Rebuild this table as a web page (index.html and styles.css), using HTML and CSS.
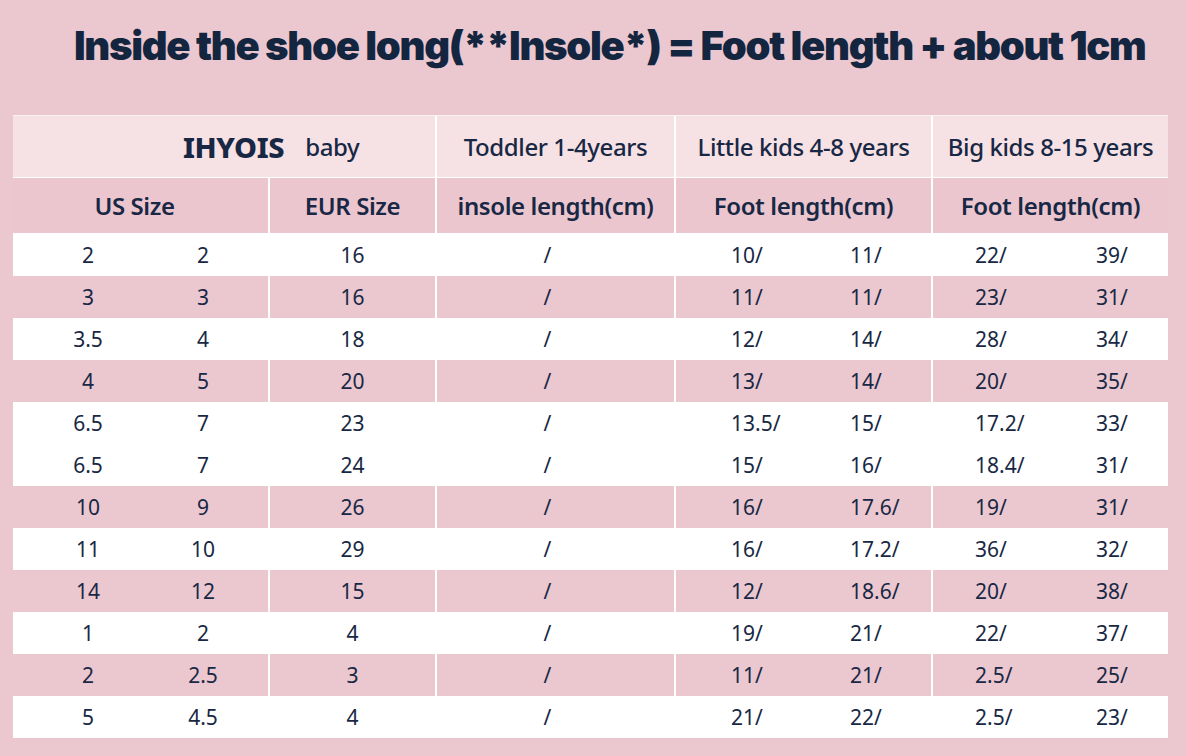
FILE: index.html
```html
<!DOCTYPE html>
<html lang="en">
<head>
<meta charset="utf-8">
<title>Size chart</title>
<link rel="stylesheet" href="styles.css">
</head>
<body>
<main class="page">
  <h1 class="title">Inside the shoe long(**Insole*) = Foot length + about 1cm</h1>
  <div class="chart">
    <div class="row head1">
      <div class="cell c12 brand"><span class="logo">IHYOIS</span><span class="baby">baby</span></div>
      <div class="cell c3">Toddler 1-4years</div>
      <div class="cell c4">Little kids 4-8 years</div>
      <div class="cell c5">Big kids 8-15 years</div>
    </div>
    <div class="row head2">
      <div class="cell c1">US Size</div>
      <div class="cell c2">EUR Size</div>
      <div class="cell c3">insole length(cm)</div>
      <div class="cell c4">Foot length(cm)</div>
      <div class="cell c5">Foot length(cm)</div>
    </div>

    <div class="row data">
      <div class="cell c1 pair"><span class="a">2</span><span class="b">2</span></div>
      <div class="cell c2">16</div><div class="cell c3">/</div>
      <div class="cell c4 pair"><span class="a">10/</span><span class="b">11/</span></div>
      <div class="cell c5 pair"><span class="a">22/</span><span class="b">39/</span></div>
    </div>
    <div class="row data pink">
      <div class="cell c1 pair"><span class="a">3</span><span class="b">3</span></div>
      <div class="cell c2">16</div><div class="cell c3">/</div>
      <div class="cell c4 pair"><span class="a">11/</span><span class="b">11/</span></div>
      <div class="cell c5 pair"><span class="a">23/</span><span class="b">31/</span></div>
    </div>
    <div class="row data">
      <div class="cell c1 pair"><span class="a">3.5</span><span class="b">4</span></div>
      <div class="cell c2">18</div><div class="cell c3">/</div>
      <div class="cell c4 pair"><span class="a">12/</span><span class="b">14/</span></div>
      <div class="cell c5 pair"><span class="a">28/</span><span class="b">34/</span></div>
    </div>
    <div class="row data pink">
      <div class="cell c1 pair"><span class="a">4</span><span class="b">5</span></div>
      <div class="cell c2">20</div><div class="cell c3">/</div>
      <div class="cell c4 pair"><span class="a">13/</span><span class="b">14/</span></div>
      <div class="cell c5 pair"><span class="a">20/</span><span class="b">35/</span></div>
    </div>
    <div class="row data">
      <div class="cell c1 pair"><span class="a">6.5</span><span class="b">7</span></div>
      <div class="cell c2">23</div><div class="cell c3">/</div>
      <div class="cell c4 pair"><span class="a">13.5/</span><span class="b">15/</span></div>
      <div class="cell c5 pair"><span class="a">17.2/</span><span class="b">33/</span></div>
    </div>
    <div class="row data">
      <div class="cell c1 pair"><span class="a">6.5</span><span class="b">7</span></div>
      <div class="cell c2">24</div><div class="cell c3">/</div>
      <div class="cell c4 pair"><span class="a">15/</span><span class="b">16/</span></div>
      <div class="cell c5 pair"><span class="a">18.4/</span><span class="b">31/</span></div>
    </div>
    <div class="row data pink">
      <div class="cell c1 pair"><span class="a">10</span><span class="b">9</span></div>
      <div class="cell c2">26</div><div class="cell c3">/</div>
      <div class="cell c4 pair"><span class="a">16/</span><span class="b">17.6/</span></div>
      <div class="cell c5 pair"><span class="a">19/</span><span class="b">31/</span></div>
    </div>
    <div class="row data">
      <div class="cell c1 pair"><span class="a">11</span><span class="b">10</span></div>
      <div class="cell c2">29</div><div class="cell c3">/</div>
      <div class="cell c4 pair"><span class="a">16/</span><span class="b">17.2/</span></div>
      <div class="cell c5 pair"><span class="a">36/</span><span class="b">32/</span></div>
    </div>
    <div class="row data pink">
      <div class="cell c1 pair"><span class="a">14</span><span class="b">12</span></div>
      <div class="cell c2">15</div><div class="cell c3">/</div>
      <div class="cell c4 pair"><span class="a">12/</span><span class="b">18.6/</span></div>
      <div class="cell c5 pair"><span class="a">20/</span><span class="b">38/</span></div>
    </div>
    <div class="row data">
      <div class="cell c1 pair"><span class="a">1</span><span class="b">2</span></div>
      <div class="cell c2">4</div><div class="cell c3">/</div>
      <div class="cell c4 pair"><span class="a">19/</span><span class="b">21/</span></div>
      <div class="cell c5 pair"><span class="a">22/</span><span class="b">37/</span></div>
    </div>
    <div class="row data pink">
      <div class="cell c1 pair"><span class="a">2</span><span class="b">2.5</span></div>
      <div class="cell c2">3</div><div class="cell c3">/</div>
      <div class="cell c4 pair"><span class="a">11/</span><span class="b">21/</span></div>
      <div class="cell c5 pair"><span class="a">2.5/</span><span class="b">25/</span></div>
    </div>
    <div class="row data">
      <div class="cell c1 pair"><span class="a">5</span><span class="b">4.5</span></div>
      <div class="cell c2">4</div><div class="cell c3">/</div>
      <div class="cell c4 pair"><span class="a">21/</span><span class="b">22/</span></div>
      <div class="cell c5 pair"><span class="a">2.5/</span><span class="b">23/</span></div>
    </div>
  </div>
</main>
</body>
</html>
```

FILE: styles.css
```css
* { box-sizing: border-box; }

html, body {
  margin: 0;
  padding: 0;
  background: #ebc8d0;
}

.page {
  width: 1186px;
  height: 756px;
  overflow: hidden;
  background: #ebc8d0;
  color: #182844;
  font-family: "Noto Sans", "Open Sans", sans-serif;
}

.title {
  margin: 0;
  padding: 22px 0 0 74px;
  height: 115px;
  font-family: Inter, Roboto, sans-serif;
  font-weight: 900;
  font-size: 40px;
  line-height: 48px;
  letter-spacing: -1.3px;
  color: #14263f;
  white-space: nowrap;
}

.chart {
  margin-left: 13px;
  width: 1155px;
  background: #ffffff;
}

.row {
  display: grid;
  grid-template-columns: 255px 167px 239px 257px 237px;
}

.cell {
  display: flex;
  align-items: center;
  justify-content: center;
  border-left: 2px solid #ffffff;
  white-space: nowrap;
}

.cell.c1, .cell.c12 { border-left: 0; }
.c12 { grid-column: 1 / span 2; }

.head1 {
  height: 63px;
  background: #f6e1e5;
  border-top: 1px solid #fbf0f2;
  border-bottom: 1px solid #ffffff;
  font-size: 24px;
  font-weight: 500;
  letter-spacing: -0.4px;
}

.brand { justify-content: flex-start; padding-left: 170px; }
.logo {
  font-size: 29px;
  font-weight: 800;
  letter-spacing: -0.4px;
  margin-right: 21px;
}
.baby {
  font-size: 24px;
  font-weight: 500;
}

.head2 {
  height: 56px;
  background: #ebc6cf;
  border-bottom: 1px solid #ffffff;
  font-size: 24px;
  font-weight: 600;
  letter-spacing: -0.4px;
}
.head2 .c1 { padding-right: 12px; }

.data {
  height: 42px;
  font-size: 21px;
  font-weight: 400;
  background: #ffffff;
}
.data.pink { background: #ebc7d0; }

.data .c3 { padding-right: 16px; }

.pair { justify-content: flex-start; }
.c1.pair .a { width: 60px; margin-left: 45px; text-align: center; }
.c1.pair .b { width: 60px; margin-left: 55px; text-align: center; }
.c4.pair .a { width: 119px; margin-left: 55px; }
.c4.pair .b { width: 70px; }
.c5.pair .a { width: 121px; margin-left: 42px; }
.c5.pair .b { width: 60px; }
```
